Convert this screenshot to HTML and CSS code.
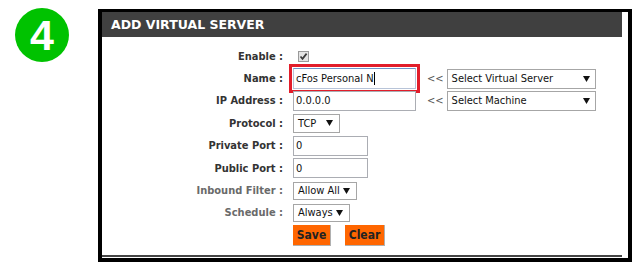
FILE: index.html
```html
<!DOCTYPE html>
<html lang="en">
<head>
    <meta charset="UTF-8">
    <title>Add Virtual Server</title>
    <link rel="stylesheet" href="styles.css">
</head>
<body>
    <div class="page">
        <div class="step">4</div>

        <div class="frame">
            <div class="panel">
                <div class="panel-head">ADD VIRTUAL SERVER</div>

                <div class="form">
                    <div class="row">
                        <span class="label">Enable :</span>
                        <div class="field">
                            <span class="check">
                                <svg width="9" height="9" viewBox="0 0 9 9"><path d="M1.5 4.5 L3.5 6.8 L7.6 1.6" fill="none" stroke="#3a3a3a" stroke-width="1.7"/></svg>
                            </span>
                        </div>
                    </div>

                    <div class="row">
                        <span class="label">Name :</span>
                        <div class="field">
                            <div class="highlight">
                                <div class="input input-wide input-focus">cFos Personal N<span class="caret"></span></div>
                            </div>
                            <span class="arrows">&lt;&lt;</span>
                            <div class="select select-wide">
                                <span>Select Virtual Server</span>
                                <svg width="7" height="6" viewBox="0 0 7 6"><polygon points="0,0 7,0 3.5,6" fill="#111"/></svg>
                            </div>
                        </div>
                    </div>

                    <div class="row">
                        <span class="label">IP Address :</span>
                        <div class="field">
                            <div class="input input-wide">0.0.0.0</div>
                            <span class="arrows">&lt;&lt;</span>
                            <div class="select select-wide">
                                <span>Select Machine</span>
                                <svg width="7" height="6" viewBox="0 0 7 6"><polygon points="0,0 7,0 3.5,6" fill="#111"/></svg>
                            </div>
                        </div>
                    </div>

                    <div class="row">
                        <span class="label">Protocol :</span>
                        <div class="field">
                            <div class="select select-protocol">
                                <span>TCP</span>
                                <svg width="7" height="6" viewBox="0 0 7 6"><polygon points="0,0 7,0 3.5,6" fill="#111"/></svg>
                            </div>
                        </div>
                    </div>

                    <div class="row">
                        <span class="label">Private Port :</span>
                        <div class="field">
                            <div class="input input-port">0</div>
                        </div>
                    </div>

                    <div class="row">
                        <span class="label">Public Port :</span>
                        <div class="field">
                            <div class="input input-port">0</div>
                        </div>
                    </div>

                    <div class="row">
                        <span class="label muted">Inbound Filter :</span>
                        <div class="field">
                            <div class="select select-filter">
                                <span>Allow All</span>
                                <svg width="7" height="6" viewBox="0 0 7 6"><polygon points="0,0 7,0 3.5,6" fill="#111"/></svg>
                            </div>
                        </div>
                    </div>

                    <div class="row">
                        <span class="label muted">Schedule :</span>
                        <div class="field">
                            <div class="select select-schedule">
                                <span>Always</span>
                                <svg width="7" height="6" viewBox="0 0 7 6"><polygon points="0,0 7,0 3.5,6" fill="#111"/></svg>
                            </div>
                        </div>
                    </div>

                    <div class="row">
                        <span class="label"></span>
                        <div class="field buttons">
                            <button class="button button-save">Save</button>
                            <button class="button button-clear">Clear</button>
                        </div>
                    </div>
                </div>
            </div>
        </div>
    </div>
</body>
</html>
```

FILE: styles.css
```css
* {
    box-sizing: border-box;
    margin: 0;
    padding: 0;
}

body {
    background: #fff;
    font-family: "DejaVu Sans Condensed", "DejaVu Sans", sans-serif;
    font-size: 11px;
    color: #222;
}

.page {
    display: flex;
    align-items: flex-start;
    padding: 8px 0 0 15px;
}

.step {
    width: 54px;
    height: 54px;
    border-radius: 50%;
    background: #00c200;
    color: #fff;
    font: bold 43px "Liberation Sans", Arial, sans-serif;
    display: flex;
    align-items: center;
    justify-content: center;
}

.frame {
    margin: 1px 0 0 29px;
    width: 534px;
    border: 4px solid #000;
    border-top-width: 3px;
    padding: 0 6px 1px 0;
}

.panel-head {
    height: 25px;
    background: #404040;
    color: #fff;
    font: bold 12.5px "DejaVu Sans", sans-serif;
    line-height: 26px;
    padding-left: 9px;
}

.form {
    padding: 8px 0 8px;
    border-bottom: 2px solid #444;
}

.row {
    display: flex;
    align-items: center;
    height: 22.4px;
}

.label {
    width: 181px;
    text-align: right;
    font-weight: bold;
    color: #333;
}

.label.muted {
    color: #6a6a6a;
}

.field {
    display: flex;
    align-items: center;
    margin-left: 10px;
}

.check {
    display: flex;
    align-items: center;
    justify-content: center;
    width: 11px;
    height: 11px;
    margin-left: 5px;
    border: 1px solid #9a9a9a;
    background: #e4e4e4;
}

.highlight {
    border: 3px solid #e21d2a;
    padding: 1px;
    margin: -4px 0 -4px -4px;
}

.input {
    display: flex;
    align-items: center;
    height: 20px;
    padding-left: 2px;
    border: 1px solid #abadb3;
    background: #fff;
    color: #111;
}

.input-wide {
    width: 123px;
}

.input-focus {
    height: 21px;
    border-color: #b8c4d8;
    border-top-color: #6f93c8;
}

.input-port {
    width: 75px;
}

.caret {
    display: inline-block;
    width: 1px;
    height: 13px;
    background: #000;
}

.arrows {
    margin: 0 3px 0 11px;
    color: #555;
}

.highlight + .arrows {
    margin-left: 7px;
}

.select {
    display: flex;
    align-items: center;
    justify-content: space-between;
    height: 19px;
    padding: 0 6px 0 4px;
    border: 1px solid #a6a6a6;
    background: #fff;
    color: #111;
}

.select-wide {
    width: 149px;
    height: 20px;
    padding-right: 5px;
}

.select-protocol {
    width: 47px;
}

.select-filter {
    width: 64px;
    height: 18px;
}

.select-schedule {
    width: 57px;
    height: 18px;
}

.buttons {
    gap: 14px;
}

.button {
    height: 21px;
    border: none;
    border-right: 1px solid #b0b0b0;
    border-bottom: 1px solid #b0b0b0;
    background: #ff6600;
    color: #222;
    font: bold 12px "DejaVu Sans Condensed", "DejaVu Sans", sans-serif;
}

.button-save {
    width: 38px;
}

.button-clear {
    width: 40px;
}
```
